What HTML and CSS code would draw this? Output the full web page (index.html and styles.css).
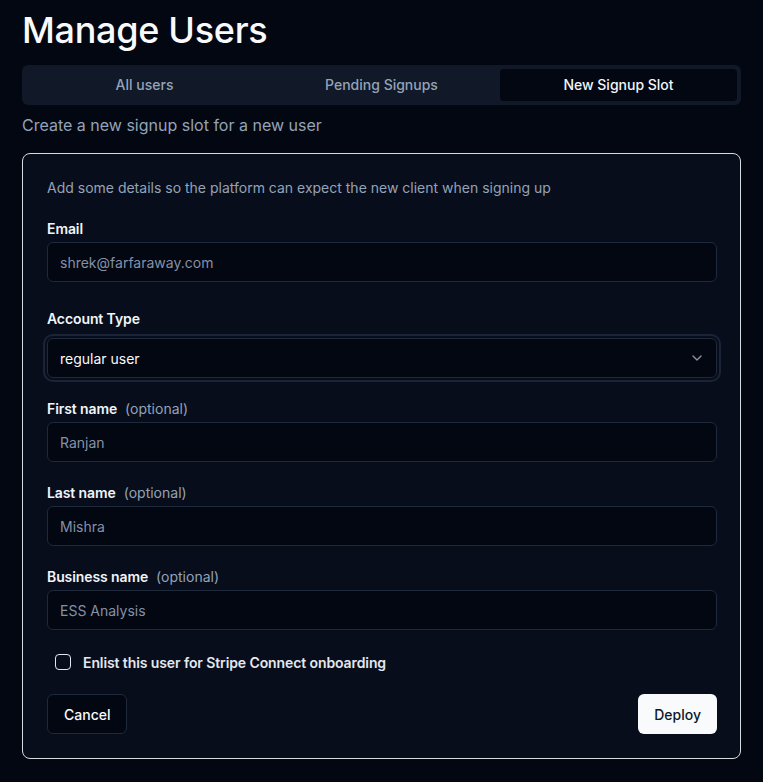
FILE: index.html
```html
<!DOCTYPE html>
<html lang="en">
<head>
<meta charset="utf-8">
<title>Manage Users</title>
<link rel="stylesheet" href="styles.css">
</head>
<body>
<main class="page">
  <h1 class="title">Manage Users</h1>
  <div class="tabs">
    <button class="tab">All users</button>
    <button class="tab">Pending Signups</button>
    <button class="tab active">New Signup Slot</button>
  </div>
  <p class="subtitle">Create a new signup slot for a new user</p>
  <section class="card">
    <p class="desc">Add some details so the platform can expect the new client when signing up</p>
    <div class="field">
      <label class="label">Email</label>
      <input class="input" placeholder="shrek@farfaraway.com">
    </div>
    <div class="field field-select">
      <label class="label">Account Type</label>
      <div class="select">
        <span>regular user</span>
        <svg class="chev" width="16" height="16" viewBox="0 0 24 24" fill="none" stroke="currentColor" stroke-width="2" stroke-linecap="round" stroke-linejoin="round"><path d="m6 9 6 6 6-6"/></svg>
      </div>
    </div>
    <div class="field">
      <label class="label">First name<span class="opt">(optional)</span></label>
      <input class="input" placeholder="Ranjan">
    </div>
    <div class="field">
      <label class="label">Last name<span class="opt">(optional)</span></label>
      <input class="input" placeholder="Mishra">
    </div>
    <div class="field">
      <label class="label">Business name<span class="opt">(optional)</span></label>
      <input class="input" placeholder="ESS Analysis">
    </div>
    <div class="check-row">
      <span class="checkbox"></span>
      <span class="check-label">Enlist this user for Stripe Connect onboarding</span>
    </div>
    <div class="actions">
      <button class="btn btn-outline">Cancel</button>
      <button class="btn btn-primary">Deploy</button>
    </div>
  </section>
</main>
</body>
</html>
```
FILE: styles.css
```css
* { box-sizing: border-box; }
html, body { margin: 0; padding: 0; }
body {
  background: #030711;
  color: #f8fafc;
  font-family: Inter, "Liberation Sans", sans-serif;
  height: 782px;
  overflow: hidden;
}
.page {
  padding: 10px 22px 0 22px;
}
.title {
  margin: 0;
  font-size: 36px;
  line-height: 40px;
  font-weight: 500;
  color: #f8fafc;
  letter-spacing: -0.3px;
}
.tabs {
  margin-top: 15px;
  height: 40px;
  background: #111827;
  border-radius: 6px;
  padding: 4px;
  display: grid;
  grid-template-columns: 1fr 1fr 1fr;
}
.tab {
  border: 0;
  background: transparent;
  font-family: inherit;
  font-size: 14px;
  font-weight: 500;
  color: #94a3b8;
  border-radius: 4px;
  padding: 0 0 2px 0;
}
.tab.active {
  background: #030711;
  color: #f1f5f9;
}
.subtitle {
  margin: 8px 0 0 0;
  font-size: 16px;
  line-height: 24px;
  color: #94a3b8;
}
.card {
  margin-top: 16px;
  border: 1px solid #d7dce3;
  border-radius: 8px;
  background: #080d1b;
  padding: 24px 23px 24px 24px;
  display: flex;
  flex-direction: column;
}
.desc {
  margin: 0;
  font-size: 14px;
  line-height: 20px;
  color: #94a3b8;
}
.field {
  margin-top: 24px;
  display: flex;
  flex-direction: column;
}
.label {
  font-size: 14px;
  line-height: 14px;
  font-weight: 600;
  letter-spacing: -0.1px;
  color: #f1f5f9;
  margin-bottom: 6px;
}
.opt {
  font-weight: 400;
  letter-spacing: 0;
  color: #94a3b8;
  margin-left: 8px;
}
.input {
  height: 40px;
  border: 1px solid #1e293b;
  background: #030711;
  border-radius: 6px;
  padding: 0 12px;
  font-family: inherit;
  font-size: 14px;
  color: #f8fafc;
  outline: none;
}
.input::placeholder { color: #8391a7; }
.field-select { margin-top: 30px; }
.field-select .label { margin-bottom: 12px; }
.select {
  height: 40px;
  border: 1px solid #1e293b;
  background: #030711;
  border-radius: 6px;
  padding: 0 11px 0 12px;
  display: flex;
  align-items: center;
  justify-content: space-between;
  font-size: 14px;
  color: #f8fafc;
  box-shadow: 0 0 0 2px #080d1b, 0 0 0 4px #1b2436;
}
.chev { color: #8a93a3; }
.check-row {
  margin-top: 24px;
  padding-left: 8px;
  display: flex;
  align-items: center;
  gap: 12px;
  height: 16px;
}
.checkbox {
  width: 16px;
  height: 16px;
  border: 1px solid #e2e8f0;
  border-radius: 4px;
}
.check-label {
  font-size: 14px;
  font-weight: 600;
  letter-spacing: -0.1px;
  color: #e2e8f0;
}
.actions {
  margin-top: 24px;
  display: flex;
  justify-content: space-between;
}
.btn {
  height: 40px;
  padding: 0 16px;
  border-radius: 6px;
  font-family: inherit;
  font-size: 14px;
  font-weight: 500;
}
.btn-outline {
  border: 1px solid #1e293b;
  background: #030711;
  color: #f8fafc;
}
.btn-primary {
  border: 0;
  background: #f8fafc;
  color: #0f172a;
}
```
